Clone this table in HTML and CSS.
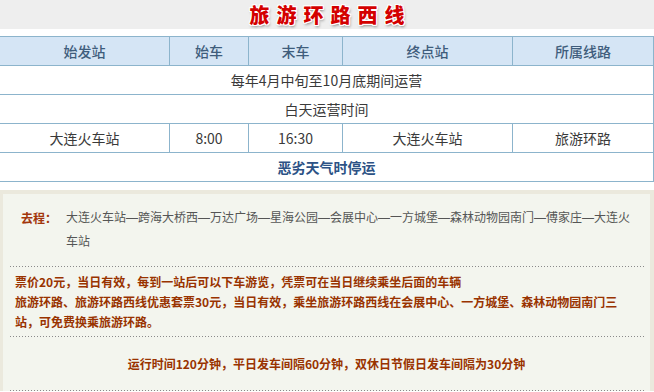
FILE: index.html
```html
<!DOCTYPE html>
<html lang="zh-CN">
<head>
<meta charset="utf-8">
<title>旅游环路西线</title>
<link rel="stylesheet" href="styles.css">
</head>
<body>
  <header class="title-bar">
    <h1 class="title">旅游环路西线</h1>
  </header>

  <table class="schedule">
    <colgroup>
      <col class="c-start">
      <col class="c-first">
      <col class="c-last">
      <col class="c-end">
      <col class="c-line">
    </colgroup>
    <thead>
      <tr>
        <th>始发站</th>
        <th>始车</th>
        <th>末车</th>
        <th>终点站</th>
        <th>所属线路</th>
      </tr>
    </thead>
    <tbody>
      <tr><td colspan="5">每年4月中旬至10月底期间运营</td></tr>
      <tr><td colspan="5">白天运营时间</td></tr>
      <tr>
        <td>大连火车站</td>
        <td>8:00</td>
        <td>16:30</td>
        <td>大连火车站</td>
        <td>旅游环路</td>
      </tr>
      <tr><td colspan="5" class="notice">恶劣天气时停运</td></tr>
    </tbody>
  </table>

  <section class="info">
    <div class="info-inner">
      <div class="route">
        <span class="route-label">去程：</span>
        <span class="route-stops">大连火车站—跨海大桥西—万达广场—星海公园—会展中心—一方城堡—森林动物园南门—傅家庄—大连火车站</span>
      </div>
      <div class="rule"></div>
      <div class="tickets">
        <p>票价20元，当日有效，每到一站后可以下车游览，凭票可在当日继续乘坐后面的车辆</p>
        <p>旅游环路、旅游环路西线优惠套票30元，当日有效，乘坐旅游环路西线在会展中心、一方城堡、森林动物园南门三站，可免费换乘旅游环路。</p>
      </div>
      <div class="rule"></div>
      <p class="timing">运行时间120分钟，平日发车间隔60分钟，双休日节假日发车间隔为30分钟</p>
      <div class="rule"></div>
    </div>
  </section>
</body>
</html>
```

FILE: styles.css
```css
* {
  box-sizing: border-box;
}

html, body {
  margin: 0;
  padding: 0;
  background: #ffffff;
  overflow: hidden;
}

body {
  font-family: "Noto Sans CJK SC", "Noto Sans", "Liberation Sans", sans-serif;
  color: #3a3a3a;
}

/* heading band */
.title-bar {
  height: 29px;
  background: #eeeeee;
  display: flex;
  align-items: center;
  justify-content: center;
}

.title {
  margin: 0;
  font-size: 20px;
  line-height: 29px;
  font-weight: 900;
  letter-spacing: 7px;
  padding-left: 7px;
  color: #d40000;
  text-shadow:
    1px 0 0 #fff, -1px 0 0 #fff, 0 1px 0 #fff, 0 -1px 0 #fff,
    1px 1px 0 #fff, -1px -1px 0 #fff, 1px -1px 0 #fff, -1px 1px 0 #fff,
    1px 2px 3px rgba(0, 0, 0, 0.45);
}

/* timetable */
.schedule {
  margin: 7px 0 0 -1px;
  width: 654px;
  table-layout: fixed;
  border-collapse: collapse;
  font-size: 14px;
}

.c-start { width: 170px; }
.c-first { width: 79px; }
.c-last { width: 94px; }
.c-end { width: 170px; }
.c-line { width: 141px; }

.schedule th,
.schedule td {
  height: 29px;
  padding: 0;
  border: 1px solid #8cb4cc;
  text-align: center;
  vertical-align: middle;
  line-height: 20px;
}

.schedule th {
  background: #d5e5f5;
  color: #3f5d7c;
  font-weight: 500;
}

.schedule td {
  color: #3a3a3a;
}

.schedule td.notice {
  color: #2c5285;
  font-weight: 700;
}

/* route and fare notes */
.info {
  margin-top: 8px;
  background: #ebe9dd;
  padding: 4px 4px 0 3px;
}

.info-inner {
  background: #f3f5ee;
  font-size: 12px;
}

.route {
  display: flex;
  padding: 12px 16px 12px 18px;
  line-height: 24px;
}

.route-label {
  flex: 0 0 45px;
  color: #a2360b;
  font-weight: 700;
}

/* Latin face first so the em dashes come out a full em wide */
.route-stops {
  color: #555555;
  font-family: "Liberation Sans", "Noto Sans CJK SC", sans-serif;
}

.rule {
  height: 1px;
  margin: 0 5px 0 7px;
  background-image: repeating-linear-gradient(to right, #8a8a8a 0 1px, transparent 1px 3px);
}

.tickets {
  padding: 5px 28px 4px 12px;
}

.tickets p,
.timing {
  margin: 0;
  line-height: 20px;
  color: #993300;
  font-weight: 700;
}

.timing {
  text-align: center;
  padding: 17px 0 16px;
}
```
